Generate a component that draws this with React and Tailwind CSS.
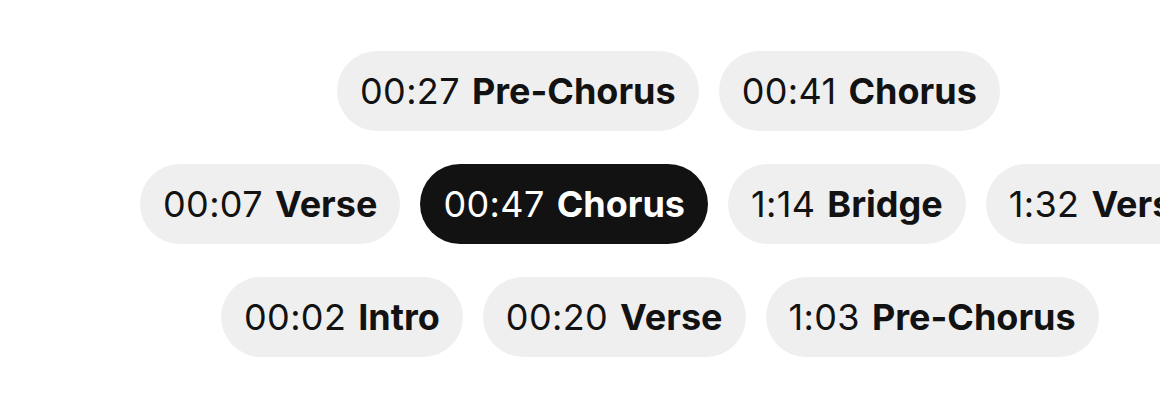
import React from "react";

const rows = [
  {
    offset: "pl-[337px]",
    items: [
      { time: "00:27", label: "Pre-Chorus" },
      { time: "00:41", label: "Chorus" },
    ],
  },
  {
    offset: "pl-[140px]",
    items: [
      { time: "00:07", label: "Verse" },
      { time: "00:47", label: "Chorus", active: true },
      { time: "1:14", label: "Bridge" },
      { time: "1:32", label: "Verse" },
    ],
  },
  {
    offset: "pl-[221px]",
    items: [
      { time: "00:02", label: "Intro" },
      { time: "00:20", label: "Verse" },
      { time: "1:03", label: "Pre-Chorus" },
    ],
  },
];

const Chip = ({ time, label, active }) => (
  <button
    className={`shrink-0 h-[80px] px-[23px] rounded-full flex items-center text-[36px] whitespace-nowrap ${
      active ? "bg-[#121212] text-white" : "bg-[#efefef] text-[#121212]"
    }`}
  >
    <span className="font-normal tracking-[0.01em]">{time}</span>
    <span className="font-bold ml-[12px]">{label}</span>
  </button>
);

export default function App() {
  return (
    <div
      className="w-[1160px] h-[408px] bg-white overflow-hidden pt-[51px] flex flex-col gap-[33px]"
      style={{ fontFamily: "Inter, 'Noto Sans', sans-serif" }}
    >
      {rows.map((row, i) => (
        <div key={i} className={`flex gap-[20px] ${row.offset}`}>
          {row.items.map((item, j) => (
            <Chip key={j} {...item} />
          ))}
        </div>
      ))}
    </div>
  );
}
